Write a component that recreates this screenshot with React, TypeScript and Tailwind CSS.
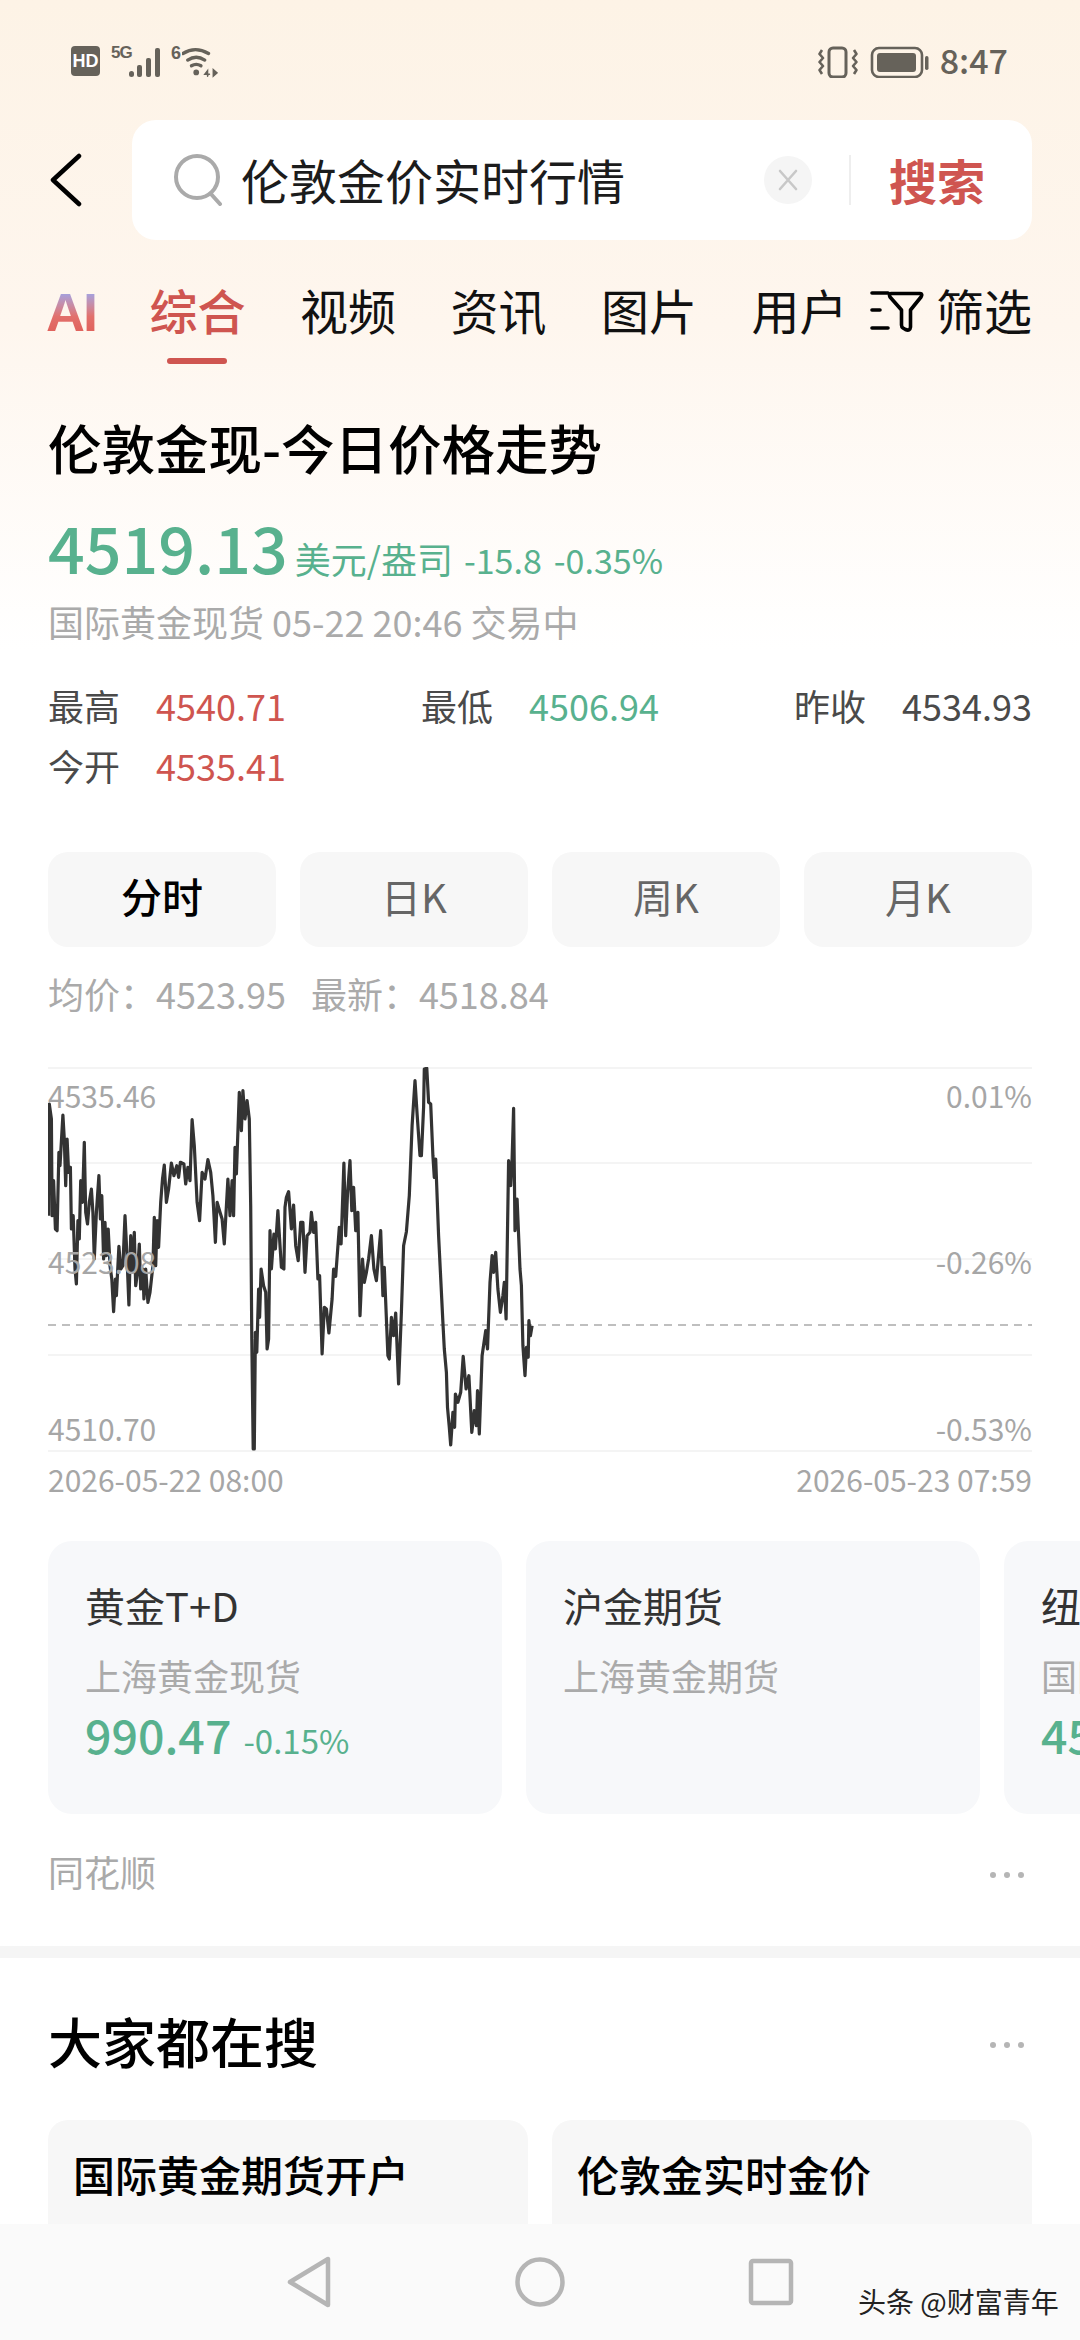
import React from 'react';

const RAW = "136,530 138,195 144,240 146,530 150,425 155,570 160,575 165,340 168,380 176,228 180,300 184,440 188,300 192,400 197,385 200,570 205,530 210,690 214,735 218,545 222,600 226,425 231,490 236,310 240,520 245,555 250,490 256,450 260,520 264,660 270,520 277,410 281,540 285,470 290,660 294,550 298,650 303,570 308,680 313,720 318,818 323,720 326,770 333,622 338,690 344,680 350,530 355,640 361,798 366,590 370,700 376,580 380,740 385,700 390,615 394,750 400,690 403,780 408,690 414,790 420,760 428,680 432,535 436,680 440,545 444,625 450,490 455,420 460,378 466,490 472,450 480,372 487,410 495,380 500,415 505,370 515,375 520,435 526,385 532,425 538,242 544,320 552,490 559,545 566,400 574,420 582,362 590,400 596,470 603,610 608,490 616,520 622,540 628,615 638,420 644,530 650,425 654,530 658,325 662,405 670,160 676,275 680,155 686,240 692,185 698,240 702,500 705,900 709,1230 712,1230 715,880 719,940 724,750 727,835 731,690 738,740 744,760 748,930 752,900 756,575 760,690 767,585 771,630 778,515 783,600 788,685 795,690 798,505 802,475 808,458 816,570 822,498 828,620 835,665 842,550 848,550 854,700 860,590 868,580 872,520 878,580 884,550 890,720 895,710 902,945 908,805 914,810 921,882 930,780 934,690 940,712 950,565 955,615 963,372 968,590 973,465 980,365 985,515 990,445 996,575 1002,520 1008,830 1015,660 1020,730 1026,700 1032,660 1040,590 1047,690 1054,725 1066,575 1072,770 1076,685 1086,950 1090,960 1096,835 1102,890 1108,822 1116,1035 1124,820 1130,620 1138,578 1146,470 1154,260 1162,125 1168,225 1176,350 1180,350 1186,205 1188,90 1195,88 1200,190 1206,195 1212,350 1216,415 1220,360 1228,590 1240,850 1244,930 1250,1000 1253,1105 1258,1165 1262,1218 1268,1120 1273,1165 1275,1065 1282,1090 1290,1060 1297,952 1305,1050 1313,1010 1321,1180 1328,1115 1334,1160 1337,1055 1342,1185 1350,950 1360,875 1365,930 1372,730 1378,650 1382,700 1388,640 1394,750 1401,820 1408,770 1412,730 1417,840 1424,365 1430,440 1434,360 1438,208 1442,575 1448,480 1456,690 1460,740 1464,920 1470,1010 1474,925 1479,955 1481,845 1485,890 1490,860";

// traced points are in crop coords, move them into the chart box
const points = RAW.split(' ').map(p => {
    const [x, y] = p.split(',').map(Number);
    return `${(x / 2.8 - 48).toFixed(1)},${(y / 3 - 28).toFixed(1)}`;
}).join(' ');

function StatusBar() {
    return (
        <div className="flex items-center justify-between h-[120px] pl-[71px] pr-[72px] pt-[4px] text-[#66625a]">
            <div className="flex items-start h-[32px]">
                <div className="w-[29px] h-[30px] rounded-[4px] bg-[#66625a] text-white text-[18px] leading-[30px] font-bold text-center font-['Liberation_Sans',sans-serif]">HD</div>
                <span className="ml-[11px] -mt-[3px] text-[17px] leading-[20px] font-bold w-[18px] font-['Liberation_Sans',sans-serif] tracking-[-1px]">5G</span>
                <svg width="34" height="32" viewBox="0 0 34 32" className="fill-[#66625a]">
                    <rect x="0" y="25" width="5" height="6" rx="2.5" />
                    <rect x="8" y="19" width="5" height="12" rx="2" />
                    <rect x="17" y="12" width="5" height="19" rx="2" />
                    <rect x="26" y="2" width="5" height="29" rx="2" />
                </svg>
                <span className="ml-[8px] -mt-[3px] text-[18px] leading-[20px] font-bold w-[11px] font-['Liberation_Sans',sans-serif]">6</span>
                <svg width="36" height="32" viewBox="0 0 38 32" fill="none" stroke="#66625a" strokeLinecap="round" strokeWidth="3.5">
                    <path d="M1 7 Q14 -1 28 7" />
                    <path d="M6 14 Q15 8 24 14" />
                    <path d="M10 20 Q15 17 20 20" />
                    <circle cx="15" cy="27" r="3" fill="#66625a" stroke="none" />
                    <path d="M27 31 L27 25 L24 29 H29 M33 24 V31 L37 27.5 Z" strokeWidth="1.5" fill="#66625a" />
                </svg>
            </div>
            <div className="flex items-center">
                <svg width="42" height="32" viewBox="0 0 42 32" fill="none" stroke="#66625a" strokeWidth="2.5" strokeLinejoin="round">
                    <rect x="11" y="2" width="17" height="29" rx="4" strokeWidth="3" />
                    <path d="M4 4 L1.5 8 L5 12 L1.5 16 L5 20 L1.5 24 L4 28" strokeWidth="2.6" />
                    <path d="M36 4 L38.5 8 L35 12 L38.5 16 L35 20 L38.5 24 L36 28" strokeWidth="2.6" />
                </svg>
                <svg width="60" height="32" viewBox="0 0 60 32" className="ml-[10px]">
                    <rect x="2" y="2" width="50" height="29" rx="7" fill="none" stroke="#66625a" strokeWidth="2.6" />
                    <rect x="7" y="7" width="39" height="19" rx="3" fill="#66625a" />
                    <rect x="55" y="10" width="3.5" height="14" rx="1.7" fill="#66625a" />
                </svg>
                <span className="ml-[10px] mb-[5px] text-[34px] leading-[40px] font-medium">8:47</span>
            </div>
        </div>
    );
}

function SearchRow() {
    return (
        <div className="flex items-center pl-[50px] pr-[48px] h-[120px]">
            <svg width="32" height="54" viewBox="0 0 32 54" fill="none" stroke="#000" strokeWidth="4.5" strokeLinecap="round" strokeLinejoin="round" className="shrink-0">
                <path d="M29 3 L3 27 L29 51" />
            </svg>
            <div className="ml-[50px] flex-1 h-[120px] bg-white rounded-[24px] flex items-center relative">
                <svg width="50" height="52" viewBox="0 0 50 52" fill="none" stroke="#aaaaaa" strokeWidth="4" strokeLinecap="round" className="ml-[41px] shrink-0">
                    <circle cx="24" cy="23" r="21" />
                    <path d="M38 40 L47 50" />
                </svg>
                <span className="ml-[18px] mb-[2px] text-[48px] leading-[60px] text-[#1c1c1c]">伦敦金价实时行情</span>
                <div className="ml-auto w-[48px] h-[48px] rounded-full bg-[#f5f5f5] flex items-center justify-center">
                    <svg width="22" height="24" viewBox="0 0 22 24" fill="none" stroke="#c8c8c8" strokeWidth="2.6" strokeLinecap="round">
                        <path d="M3 3 L19 21 M19 3 L3 21" />
                    </svg>
                </div>
                <div className="ml-[37px] w-[2px] h-[50px] bg-[#eeeeee]" />
                <span className="ml-[38px] mr-[47px] mb-[2px] text-[48px] leading-[60px] font-bold text-[#cf5550]">搜索</span>
            </div>
        </div>
    );
}

function TabsRow() {
    return (
        <div className="flex items-center h-[96px] mt-[21px] pl-[46px] pr-[48px] text-[48px] leading-[60px] text-[#111111]">
            <span className="w-[51px] mt-[6px] text-[54px] font-bold leading-[44px] bg-linear-to-b from-[#98a6ee] via-[#e2706c] via-60% to-[#e0605a] bg-clip-text text-transparent font-['Liberation_Sans',sans-serif] tracking-[-2px]">AI</span>
            <div className="ml-[52.5px] flex gap-[54.5px]">
                <span className="relative font-medium text-[#cf5550]">
                    综合
                    <span className="absolute left-[17px] top-[79px] w-[60px] h-[6px] rounded-full bg-[#cf5550]" />
                </span>
                <span>视频</span>
                <span>资讯</span>
                <span>图片</span>
                <span>用户</span>
            </div>
            <svg width="56" height="44" viewBox="0 0 56 44" fill="none" stroke="#000" strokeWidth="3.6" strokeLinecap="round" strokeLinejoin="round" className="ml-auto mt-[6px] shrink-0">
                <path d="M2 3 H18 M2 20 H10 M2 38 H18" />
                <path d="M21 3.5 H50 Q53 3.5 51 7 L40.5 20 V37 Q40 41.5 35.5 39.5 L33 38 Q31.5 37 31.5 35 V20 L20 7 Q18.5 3.5 21 3.5 Z" />
            </svg>
            <span className="ml-[10px]">筛选</span>
        </div>
    );
}

function Stat({ label, value, color }: { label: string; value: string; color: string }) {
    return (
        <div className="flex gap-[36px] text-[36px] leading-[44px]">
            <span className="text-[#4a4a4a]">{label}</span>
            <span className={color}>{value}</span>
        </div>
    );
}

function Chart() {
    const grid = [1, 96, 192, 288, 384];
    return (
        <div className="relative mx-[48px] mt-[52px] h-[385px]">
            <svg width="984" height="385" viewBox="0 0 984 385" fill="none">
                {grid.map(y => (
                    <line key={y} x1="0" x2="984" y1={y} y2={y} stroke="#f4f4f4" strokeWidth="2" />
                ))}
                <line x1="0" x2="984" y1="258" y2="258" stroke="#aaaaaa" strokeWidth="1.5" strokeDasharray="8 6" />
                <polyline points={points} stroke="#333333" strokeWidth="3.2" strokeLinejoin="round" />
            </svg>
            <div className="absolute inset-0 text-[30px] leading-[36px] text-[#a6a6a6]">
                <span className="absolute left-0 top-[10px]">4535.46</span>
                <span className="absolute left-0 top-[176px]">4523.08</span>
                <span className="absolute left-0 top-[343px]">4510.70</span>
                <span className="absolute right-0 top-[10px]">0.01%</span>
                <span className="absolute right-0 top-[176px]">-0.26%</span>
                <span className="absolute right-0 top-[343px]">-0.53%</span>
            </div>
        </div>
    );
}

function MarketCard({ title, sub, value, pct }: { title: string; sub: string; value?: string; pct?: string }) {
    return (
        <div className="w-[454px] h-[273px] shrink-0 rounded-[24px] bg-[#f7f8fa] pl-[37px] pt-[42px]">
            <div className="text-[40px] leading-[44px] text-[#333333]">{title}</div>
            <div className="mt-[26px] text-[36px] leading-[44px] text-[#aaaaaa]">{sub}</div>
            {value && (
                <div className="mt-[9px] flex items-baseline h-[56px] text-[#58b18e] whitespace-nowrap">
                    <span className="text-[46.5px] leading-[56px] font-medium">{value}</span>
                    <span className="ml-[12px] text-[33px] leading-[56px]">{pct}</span>
                </div>
            )}
        </div>
    );
}

function Dots() {
    return (
        <svg width="36" height="8" viewBox="0 0 36 8" className="fill-[#b5b5b5] mt-[8px]">
            <circle cx="4" cy="4" r="3" />
            <circle cx="18" cy="4" r="3" />
            <circle cx="32" cy="4" r="3" />
        </svg>
    );
}

export default function App() {
    return (
        <div className="relative w-[1080px] h-[2340px] overflow-hidden bg-white font-['Noto_Sans_CJK_SC','Noto_Sans',sans-serif]">
            <div className="h-[650px] bg-linear-to-b from-[#fdf3e6] via-[#fef6ee] to-white">
                <StatusBar />
                <SearchRow />
                <TabsRow />
                <h1 className="mt-[60px] px-[48px] text-[53.5px] leading-[60px] font-medium text-black">伦敦金现-今日价格走势</h1>
                <div className="mt-[31px] px-[48px] flex items-baseline h-[76px] text-[#58b18e]">
                    <span className="text-[64.5px] leading-[76px] font-medium">4519.13</span>
                    <span className="ml-[7px] text-[36px] leading-[76px]">美元/盎司</span>
                    <span className="ml-[11px] text-[34px] leading-[76px]">-15.8</span>
                    <span className="ml-[12px] text-[34px] leading-[76px]">-0.35%</span>
                </div>
                <div className="mt-[15px] px-[48px] text-[36px] leading-[44px] text-[#aaaaaa]">国际黄金现货 05-22 20:46 交易中</div>
            </div>

            <div className="mt-[33px] px-[48px] flex justify-between">
                <Stat label="最高" value="4540.71" color="text-[#cf5550]" />
                <Stat label="最低" value="4506.94" color="text-[#58b18e]" />
                <Stat label="昨收" value="4534.93" color="text-[#4a4a4a]" />
            </div>
            <div className="mt-[16px] px-[48px]">
                <div className="flex">
                    <Stat label="今开" value="4535.41" color="text-[#cf5550]" />
                </div>
            </div>

            <div className="mt-[65px] px-[48px] grid grid-cols-4 gap-[24px] text-[40px] text-[#666666]">
                <div className="h-[95px] pb-[8px] rounded-[20px] bg-[#f7f7f7] flex items-center justify-center text-[41px] font-medium text-black">分时</div>
                <div className="h-[95px] pb-[8px] rounded-[20px] bg-[#f7f7f7] flex items-center justify-center">日K</div>
                <div className="h-[95px] pb-[8px] rounded-[20px] bg-[#f7f7f7] flex items-center justify-center">周K</div>
                <div className="h-[95px] pb-[8px] rounded-[20px] bg-[#f7f7f7] flex items-center justify-center">月K</div>
            </div>

            <div className="mt-[24px] px-[48px] flex gap-[25px] text-[36px] leading-[44px] text-[#aaaaaa]">
                <span>均价：4523.95</span>
                <span>最新：4518.84</span>
            </div>

            <Chart />

            <div className="mt-[7px] px-[48px] flex justify-between text-[30px] leading-[40px] text-[#a6a6a6]">
                <span>2026-05-22 08:00</span>
                <span>2026-05-23 07:59</span>
            </div>

            <div className="mt-[42px] pl-[48px] flex gap-[24px]">
                <MarketCard title="黄金T+D" sub="上海黄金现货" value="990.47" pct="-0.15%" />
                <MarketCard title="沪金期货" sub="上海黄金期货" />
                <MarketCard title="纽约黄金" sub="国际黄金期货" value="4519.10" pct="-0.35%" />
            </div>

            <div className="mt-[35px] px-[48px] pr-[55px] flex items-center justify-between h-[44px]">
                <span className="text-[36px] leading-[44px] text-[#aaaaaa]">同花顺</span>
                <Dots />
            </div>

            <div className="mt-[53px] h-[12px] bg-[#f5f5f5]" />

            <div className="mt-[53px] pl-[48px] pr-[55px] flex items-center justify-between h-[60px]">
                <h2 className="text-[54px] leading-[60px] font-medium text-black">大家都在搜</h2>
                <Dots />
            </div>

            <div className="mt-[49px] px-[48px] grid grid-cols-2 gap-[24px]">
                <div className="h-[200px] rounded-[20px] bg-[#f7f7f7] pl-[25px] pt-[29px] text-[42px] leading-[50px] font-medium text-black">国际黄金期货开户</div>
                <div className="h-[200px] rounded-[20px] bg-[#f7f7f7] pl-[25px] pt-[29px] text-[42px] leading-[50px] font-medium text-black">伦敦金实时金价</div>
            </div>

            <div className="absolute left-0 right-0 bottom-0 h-[116px] bg-[#fafafa]">
                <div className="flex items-center justify-center gap-[183px] h-[116px]">
                    <svg width="46" height="52" viewBox="0 0 46 52" fill="none" stroke="#b5b5b5" strokeWidth="4.5" strokeLinejoin="round">
                        <path d="M42 3 V49 L4 26 Z" />
                    </svg>
                    <svg width="50" height="52" viewBox="0 0 50 52" fill="none" stroke="#b5b5b5" strokeWidth="4.5">
                        <circle cx="25" cy="26" r="22.5" />
                    </svg>
                    <svg width="46" height="48" viewBox="0 0 46 48" fill="none" stroke="#b5b5b5" strokeWidth="4.5" strokeLinejoin="round">
                        <rect x="3" y="3" width="40" height="42" rx="2" />
                    </svg>
                </div>
                <span className="absolute left-[858px] top-[59px] text-[28px] leading-[36px] text-[#222222] whitespace-nowrap">头条 @财富青年</span>
            </div>
        </div>
    );
}
